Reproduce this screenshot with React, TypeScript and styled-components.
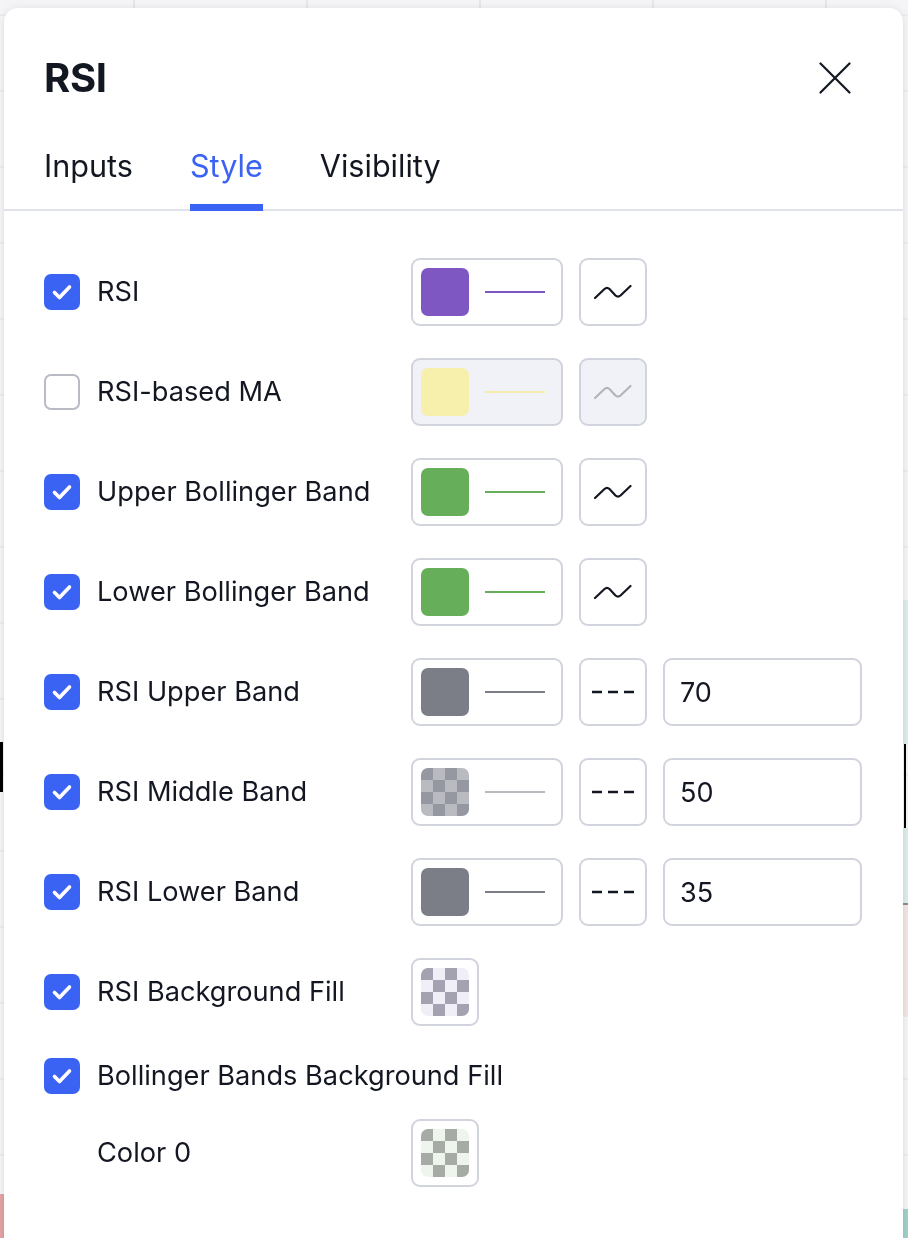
import React from 'react'
import styled, { createGlobalStyle, css } from 'styled-components'

const GlobalStyle = createGlobalStyle`
  html, body {
    margin: 0;
    padding: 0;
  }
  body {
    font-family: Inter, "Noto Sans", "Liberation Sans", sans-serif;
    color: #131722;
    background-color: #f5f5f7;
    background-image:
      linear-gradient(to right, #e6e6eb 2px, transparent 2px),
      linear-gradient(to bottom, #ececf0 2px, transparent 2px);
    background-size: 173px 76px, 173px 76px;
    background-position: 133px 0, 0 14px;
    overflow: hidden;
  }
`

const Backdrop = styled.div`
  position: fixed;
  inset: 0;
  z-index: 0;
  pointer-events: none;
`

// bits of the chart behind the dialog that peek out at the edges
const ChartMark = styled.div<{ $x: number; $y: number; $w: number; $h: number; $c: string }>`
  position: absolute;
  left: ${({ $x }) => $x}px;
  top: ${({ $y }) => $y}px;
  width: ${({ $w }) => $w}px;
  height: ${({ $h }) => $h}px;
  background: ${({ $c }) => $c};
`

const Page = styled.div`
  position: relative;
  z-index: 1;
  padding: 8px 5px 0 4px;
`

const Dialog = styled.div`
  background: #ffffff;
  border-radius: 14px 14px 0 0;
  box-shadow: 0 0 10px rgba(20, 22, 30, 0.08), 0 2px 4px rgba(20, 22, 30, 0.05);
  min-height: 1240px;
`

const Header = styled.div`
  display: flex;
  align-items: center;
  justify-content: space-between;
  height: 70px;
  padding: 35px 48px 0 40px;
`

const Title = styled.h1`
  margin: 0;
  font-size: 40px;
  font-weight: 700;
  letter-spacing: -0.3px;
  line-height: 1;
`

const CloseButton = styled.button`
  display: flex;
  align-items: center;
  justify-content: center;
  width: 40px;
  height: 40px;
  padding: 0;
  border: none;
  background: none;
  cursor: pointer;
`

const TabBar = styled.div`
  display: flex;
  gap: 57px;
  margin-top: 28px;
  padding: 0 40px;
  border-bottom: 2px solid #e0e3eb;
`

const Tab = styled.div<{ $active?: boolean }>`
  font-size: 30.6px;
  line-height: 50px;
  padding-bottom: 13px;
  margin-bottom: -2px;
  border-bottom: 7px solid transparent;
  color: #131722;
  ${({ $active }) =>
    $active &&
    css`
      color: #3a63f4;
      border-bottom-color: #3a63f4;
    `}
`

const Body = styled.div`
  display: flex;
  flex-direction: column;
  padding: 47px 40px 40px 40px;
`

const Row = styled.div<{ $gap?: number }>`
  display: flex;
  align-items: center;
  min-height: 36px;
  margin-top: ${({ $gap }) => ($gap === undefined ? 32 : $gap)}px;
  &:first-child {
    margin-top: 0;
  }
`

const CheckBox = styled.div<{ $checked: boolean }>`
  flex: none;
  width: 36px;
  height: 36px;
  box-sizing: border-box;
  border-radius: 7px;
  display: flex;
  align-items: center;
  justify-content: center;
  ${({ $checked }) =>
    $checked
      ? css`
          background: #3a63f4;
        `
      : css`
          background: #ffffff;
          border: 2px solid #b8bbc3;
        `}
`

const Label = styled.div<{ $indent?: boolean }>`
  flex: none;
  width: 314px;
  margin-left: ${({ $indent }) => ($indent ? 53 : 17)}px;
  font-size: 27.2px;
  line-height: 36px;
  white-space: nowrap;
`

const Controls = styled.div`
  display: flex;
  gap: 16px;
`

const Control = styled.div<{ $disabled?: boolean; $width?: number }>`
  box-sizing: border-box;
  height: 68px;
  width: ${({ $width }) => $width || 68}px;
  border: 2px solid #d1d4dc;
  border-radius: 9px;
  background: ${({ $disabled }) => ($disabled ? '#f0f2f7' : '#ffffff')};
  display: flex;
  align-items: center;
`

const ColorControl = styled(Control)`
  padding: 0 16px 0 8px;
  gap: 16px;
`

const IconControl = styled(Control)`
  justify-content: center;
`

const Swatch = styled.div<{ $color?: string; $checker?: [string, string] }>`
  flex: none;
  width: 48px;
  height: 48px;
  border-radius: 7px;
  background: ${({ $color }) => $color || 'transparent'};
  ${({ $checker }) =>
    $checker &&
    css`
      background: conic-gradient(
        ${$checker[1]} 25%,
        ${$checker[0]} 0 50%,
        ${$checker[1]} 0 75%,
        ${$checker[0]} 0
      );
      background-size: 24px 24px;
    `}
`

const SwatchOnly = styled(Control)`
  justify-content: center;
`

const LinePreview = styled.div<{ $color: string }>`
  flex: 1;
  height: 2px;
  background: ${({ $color }) => $color};
`

const NumberInput = styled.input`
  box-sizing: border-box;
  width: 199px;
  height: 68px;
  border: 2px solid #d1d4dc;
  border-radius: 9px;
  padding: 0 15px;
  font-family: inherit;
  font-size: 27px;
  color: #131722;
  background: #ffffff;
  outline: none;
`

const Check = () => (
  <svg width="36" height="36" viewBox="0 0 36 36">
    <path d="M10.5 18.5 L15.5 23.5 L25.5 13" fill="none" stroke="#fff" strokeWidth="3.6" strokeLinecap="round" strokeLinejoin="round" />
  </svg>
)

const Wave = ({ color }: { color: string }) => (
  <svg width="38" height="16" viewBox="0 0 38 16">
    <path
      d="M1 14 L10.5 5 Q13 2.6 15.5 5 L21.5 11.5 Q24 13.6 26.5 11.5 L36.5 2"
      fill="none"
      stroke={color}
      strokeWidth="2.2"
      strokeLinecap="round"
      strokeLinejoin="round"
    />
  </svg>
)

const Dashes = () => (
  <svg width="44" height="4" viewBox="0 0 44 4">
    <path d="M1 2 H11 M17 2 H27 M33 2 H43" stroke="#131722" strokeWidth="2.6" />
  </svg>
)

const CloseIcon = () => (
  <svg width="32" height="32" viewBox="0 0 32 32">
    <path d="M1.5 1.5 L30.5 30.5 M30.5 1.5 L1.5 30.5" stroke="#131722" strokeWidth="2.2" strokeLinecap="round" />
  </svg>
)

type Line = {
  label: string
  checked: boolean
  color?: string
  checker?: [string, string]
  lineColor: string
  dashed?: boolean
  value?: string
  disabled?: boolean
}

const lines: Line[] = [
  { label: 'RSI', checked: true, color: '#7e57c2', lineColor: '#7e57c2' },
  { label: 'RSI-based MA', checked: false, color: '#f7f0ad', lineColor: '#f4ecaa', disabled: true },
  { label: 'Upper Bollinger Band', checked: true, color: '#67ae5b', lineColor: '#67ae5b' },
  { label: 'Lower Bollinger Band', checked: true, color: '#67ae5b', lineColor: '#67ae5b' },
  { label: 'RSI Upper Band', checked: true, color: '#7b7e87', lineColor: '#7b7e87', dashed: true, value: '70' },
  { label: 'RSI Middle Band', checked: true, checker: ['#9598a1', '#b9bbc1'], lineColor: '#b9bbc1', dashed: true, value: '50' },
  { label: 'RSI Lower Band', checked: true, color: '#7b7e87', lineColor: '#7b7e87', dashed: true, value: '35' },
]

export default function App() {
  return (
    <>
      <GlobalStyle />
      <Backdrop>
        <ChartMark $x={0} $y={742} $w={3} $h={50} $c="#000" />
        <ChartMark $x={904} $y={744} $w={2} $h={84} $c="#000" />
        <ChartMark $x={903} $y={600} $w={5} $h={144} $c="#dcecea" />
        <ChartMark $x={903} $y={828} $w={5} $h={75} $c="#dcecea" />
        <ChartMark $x={903} $y={903} $w={5} $h={2} $c="#8a8d96" />
        <ChartMark $x={903} $y={905} $w={5} $h={112} $c="#f4e3e2" />
        <ChartMark $x={903} $y={1209} $w={5} $h={29} $c="#9fd0c8" />
        <ChartMark $x={0} $y={1194} $w={4} $h={44} $c="#e2a3a3" />
      </Backdrop>
      <Page>
        <Dialog>
          <Header>
            <Title>RSI</Title>
            <CloseButton aria-label="Close">
              <CloseIcon />
            </CloseButton>
          </Header>
          <TabBar>
            <Tab>Inputs</Tab>
            <Tab $active>Style</Tab>
            <Tab>Visibility</Tab>
          </TabBar>
          <Body>
            {lines.map((l) => (
              <Row key={l.label}>
                <CheckBox $checked={l.checked}>{l.checked && <Check />}</CheckBox>
                <Label>{l.label}</Label>
                <Controls>
                  <ColorControl $width={152} $disabled={l.disabled}>
                    <Swatch $color={l.color} $checker={l.checker} />
                    <LinePreview $color={l.lineColor} />
                  </ColorControl>
                  <IconControl $disabled={l.disabled}>
                    {l.dashed ? <Dashes /> : <Wave color={l.disabled ? '#b2b5be' : '#131722'} />}
                  </IconControl>
                  {l.value && <NumberInput defaultValue={l.value} />}
                </Controls>
              </Row>
            ))}
            <Row>
              <CheckBox $checked>
                <Check />
              </CheckBox>
              <Label>RSI Background Fill</Label>
              <Controls>
                <SwatchOnly>
                  <Swatch $checker={['#a4a1b1', '#f0eef7']} />
                </SwatchOnly>
              </Controls>
            </Row>
            <Row>
              <CheckBox $checked>
                <Check />
              </CheckBox>
              <Label>Bollinger Bands Background Fill</Label>
            </Row>
            <Row $gap={25}>
              <Label $indent>Color 0</Label>
              <Controls>
                <SwatchOnly>
                  <Swatch $checker={['#a6aba6', '#eef5ec']} />
                </SwatchOnly>
              </Controls>
            </Row>
          </Body>
        </Dialog>
      </Page>
    </>
  )
}
